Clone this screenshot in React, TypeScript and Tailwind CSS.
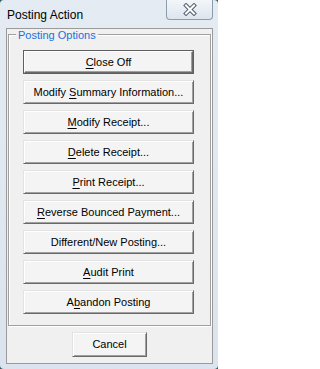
import React from "react";

type Item = { pre: string; key: string; post: string };

const items: Item[] = [
  { pre: "", key: "C", post: "lose Off" },
  { pre: "Modify ", key: "S", post: "ummary Information..." },
  { pre: "", key: "M", post: "odify Receipt..." },
  { pre: "", key: "D", post: "elete Receipt..." },
  { pre: "", key: "P", post: "rint Receipt..." },
  { pre: "", key: "R", post: "everse Bounced Payment..." },
  { pre: "Different/New Posting...", key: "", post: "" },
  { pre: "", key: "A", post: "udit Print" },
  { pre: "A", key: "b", post: "andon Posting" },
];

function Label({ it }: { it: Item }) {
  return (
    <span className="whitespace-pre">
      {it.pre}
      {it.key ? <span className="underline decoration-1 underline-offset-[2px]">{it.key}</span> : null}
      {it.post}
    </span>
  );
}

function Btn({ it, def }: { it: Item; def?: boolean }) {
  if (def) {
    return (
      <div className="w-[171px] h-[24px] border border-[#5f5f5f] flex">
        <div className="flex-1 flex items-center justify-center bg-[#f4f4f4] border border-t-white border-l-white border-r-[#696969] border-b-[#696969] shadow-[inset_-1px_-1px_0_#a0a0a0] text-[11px] leading-[13px] text-black">
          <Label it={it} />
        </div>
      </div>
    );
  }
  return (
    <div className="w-[171px] h-[24px] flex items-center justify-center bg-[#f4f4f4] border border-t-[#e3e3e3] border-l-[#e3e3e3] border-r-[#696969] border-b-[#696969] shadow-[inset_1px_1px_0_#ffffff,inset_-1px_-1px_0_#a0a0a0] text-[11px] leading-[13px] text-black">
      <Label it={it} />
    </div>
  );
}

export default function App() {
  return (
    <div className="w-[218px] h-[369px] bg-[#2c5c61] font-['Liberation_Sans',Arial,sans-serif]">
      <div className="w-full h-full rounded-[4px] bg-gradient-to-b from-[#e4ebf2] to-[#dbe4ee] flex flex-col">
        <div className="h-[28px] flex items-start justify-between pl-[7px] pr-[5px]">
          <div className="mt-[7px] text-[12px] leading-[16px] text-black">Posting Action</div>
          <div className="w-[47px] h-[20px] rounded-b-[4px] border border-t-0 border-[#8d9cad] bg-gradient-to-b from-[#f3f6f9] to-[#dde5ee] flex items-center justify-center">
            <svg width="14" height="13" viewBox="0 0 14 13">
              <path d="M3 2.5 L11 10.5 M11 2.5 L3 10.5" stroke="#4f5e6e" strokeWidth="4" strokeLinecap="square" />
              <path d="M3 2.5 L11 10.5 M11 2.5 L3 10.5" stroke="#ffffff" strokeWidth="2" strokeLinecap="square" />
            </svg>
          </div>
        </div>
        <div className="ml-[6px] mr-[5px] h-[336px] border border-[#9a9a9a] bg-[#f0f0f0] flex flex-col">
          <div className="relative mt-[5px] mx-[1px] h-[292px] border border-[#a0a0a0] shadow-[inset_1px_1px_0_#ffffff,1px_1px_0_#ffffff] pl-[14px] pt-[15px]">
            <div className="absolute left-[7px] top-[-6px] px-[2px] bg-[#f0f0f0] text-[11px] leading-[13px] text-[#1a6fdc]">
              Posting Options
            </div>
            <div className="flex flex-col gap-[6px]">
              {items.map((it, i) => (
                <Btn key={i} it={it} def={i === 0} />
              ))}
            </div>
          </div>
          <div className="mt-[6px] flex justify-center">
            <div className="w-[75px] h-[25px] flex items-center justify-center bg-[#f4f4f4] border border-t-[#e3e3e3] border-l-[#e3e3e3] border-r-[#696969] border-b-[#696969] shadow-[inset_1px_1px_0_#ffffff,inset_-1px_-1px_0_#a0a0a0] text-[11px] leading-[13px] text-black">
              Cancel
            </div>
          </div>
        </div>
      </div>
    </div>
  );
}
